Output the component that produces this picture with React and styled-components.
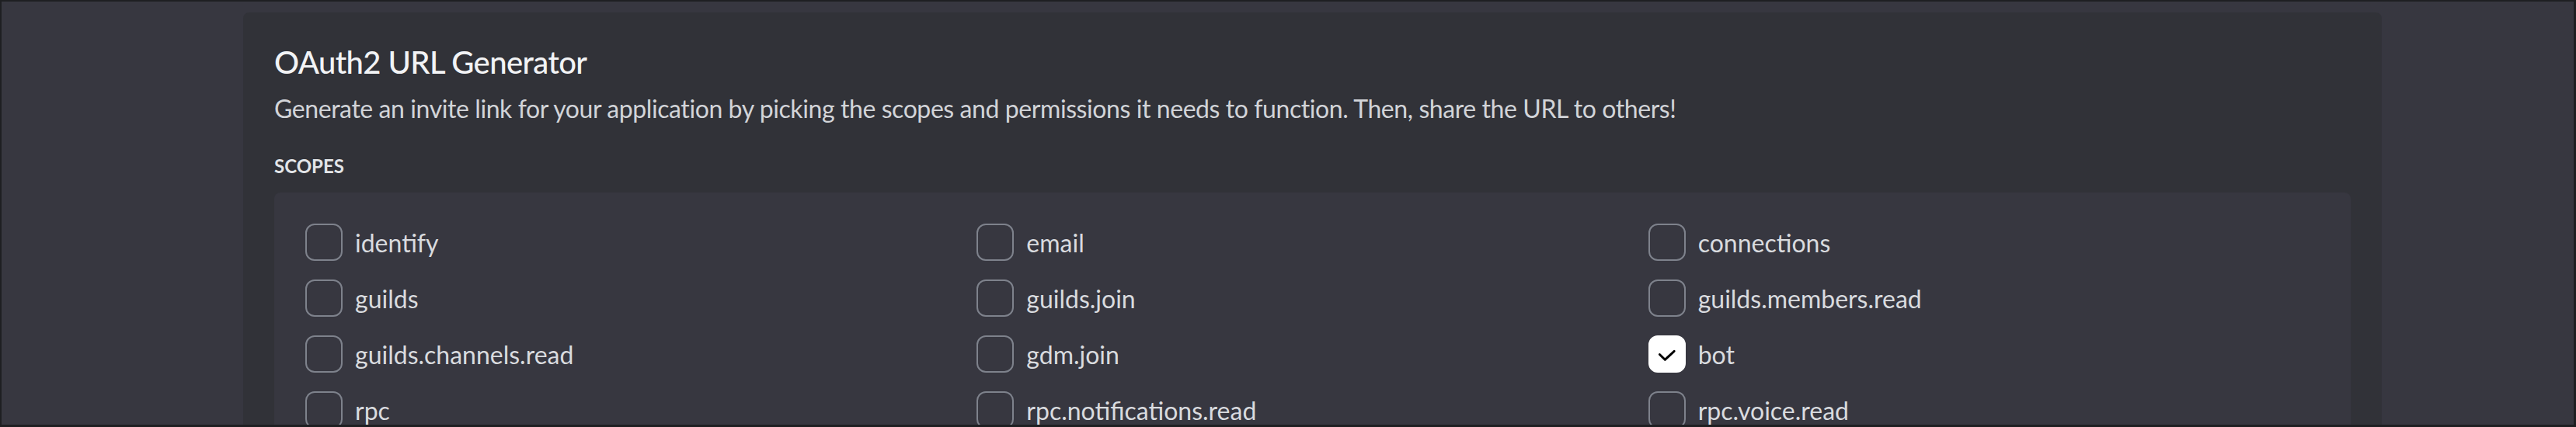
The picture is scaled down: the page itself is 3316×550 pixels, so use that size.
import React from 'react';
import styled, {createGlobalStyle} from 'styled-components';

const GlobalStyle = createGlobalStyle`
  html, body {
    margin: 0;
    padding: 0;
    overflow: hidden;
    background: #1e1f22;
  }
  * { box-sizing: border-box; }
`;

const scopes = [
  ['identify', 'email', 'connections'],
  ['guilds', 'guilds.join', 'guilds.members.read'],
  ['guilds.channels.read', 'gdm.join', 'bot'],
  ['rpc', 'rpc.notifications.read', 'rpc.voice.read'],
  ['rpc.voice.write', 'rpc.video.read', 'rpc.video.write'],
  ['rpc.screenshare.read', 'rpc.screenshare.write', 'rpc.activities.write'],
];

const checked = ['bot'];

const Frame = styled.div`
  height: 550px;
  padding: 2px 3px 3px 2px;
  background: #1e1f22;
`;

const Main = styled.main`
  height: 100%;
  overflow: hidden;
  background: #373740;
  padding: 14px 247px 0 311px;
  font-family: Lato, "Noto Sans", sans-serif;
`;

const Card = styled.section`
  background: #313238;
  border-radius: 8px;
  padding: 40px;
  min-height: 700px;
`;

const Title = styled.h2`
  margin: 0;
  font-size: 40px;
  line-height: 48px;
  font-weight: 500;
  letter-spacing: -0.6px;
  color: #f2f3f5;
`;

const Description = styled.p`
  margin: 16px 0 0;
  font-size: 32px;
  line-height: 40px;
  letter-spacing: -0.42px;
  color: #d2d4d8;
`;

const SectionLabel = styled.h3`
  margin: 38px 0 18px;
  font-size: 24px;
  line-height: 32px;
  font-weight: 700;
  text-transform: uppercase;
  color: #e3e5e8;
`;

const Panel = styled.div`
  background: #373740;
  border-radius: 8px;
  padding: 40px;
  display: grid;
  grid-template-columns: repeat(3, 1fr);
  row-gap: 24px;
`;

const Option = styled.label`
  display: flex;
  align-items: center;
  gap: 16px;
  height: 48px;
  font-size: 32px;
  color: #d9dbdf;
  cursor: pointer;
`;

const Box = styled.span`
  flex: none;
  width: 48px;
  height: 48px;
  border-radius: 12px;
  border: 2px solid ${p => (p.$on ? '#ffffff' : '#7e828c')};
  background: ${p => (p.$on ? '#ffffff' : 'transparent')};
  display: flex;
  align-items: center;
  justify-content: center;
`;

const Check = () => (
  <svg width="48" height="48" viewBox="0 0 48 48" fill="none">
    <path d="M13.5 24.5 L21 32 L34 20" stroke="#000" strokeWidth="3.2" strokeLinecap="round" strokeLinejoin="round" />
  </svg>
);

const Scope = ({name}) => {
  const on = checked.includes(name);
  return (
    <Option>
      <Box $on={on}>{on && <Check />}</Box>
      {name}
    </Option>
  );
};

export default function App() {
  return (
    <>
      <GlobalStyle />
      <Frame>
        <Main>
          <Card>
            <Title>OAuth2 URL Generator</Title>
            <Description>
              Generate an invite link for your application by picking the scopes and permissions it needs to function. Then, share the URL to others!
            </Description>
            <SectionLabel>Scopes</SectionLabel>
            <Panel>
              {scopes.flat().map(s => <Scope key={s} name={s} />)}
            </Panel>
          </Card>
        </Main>
      </Frame>
    </>
  );
}
